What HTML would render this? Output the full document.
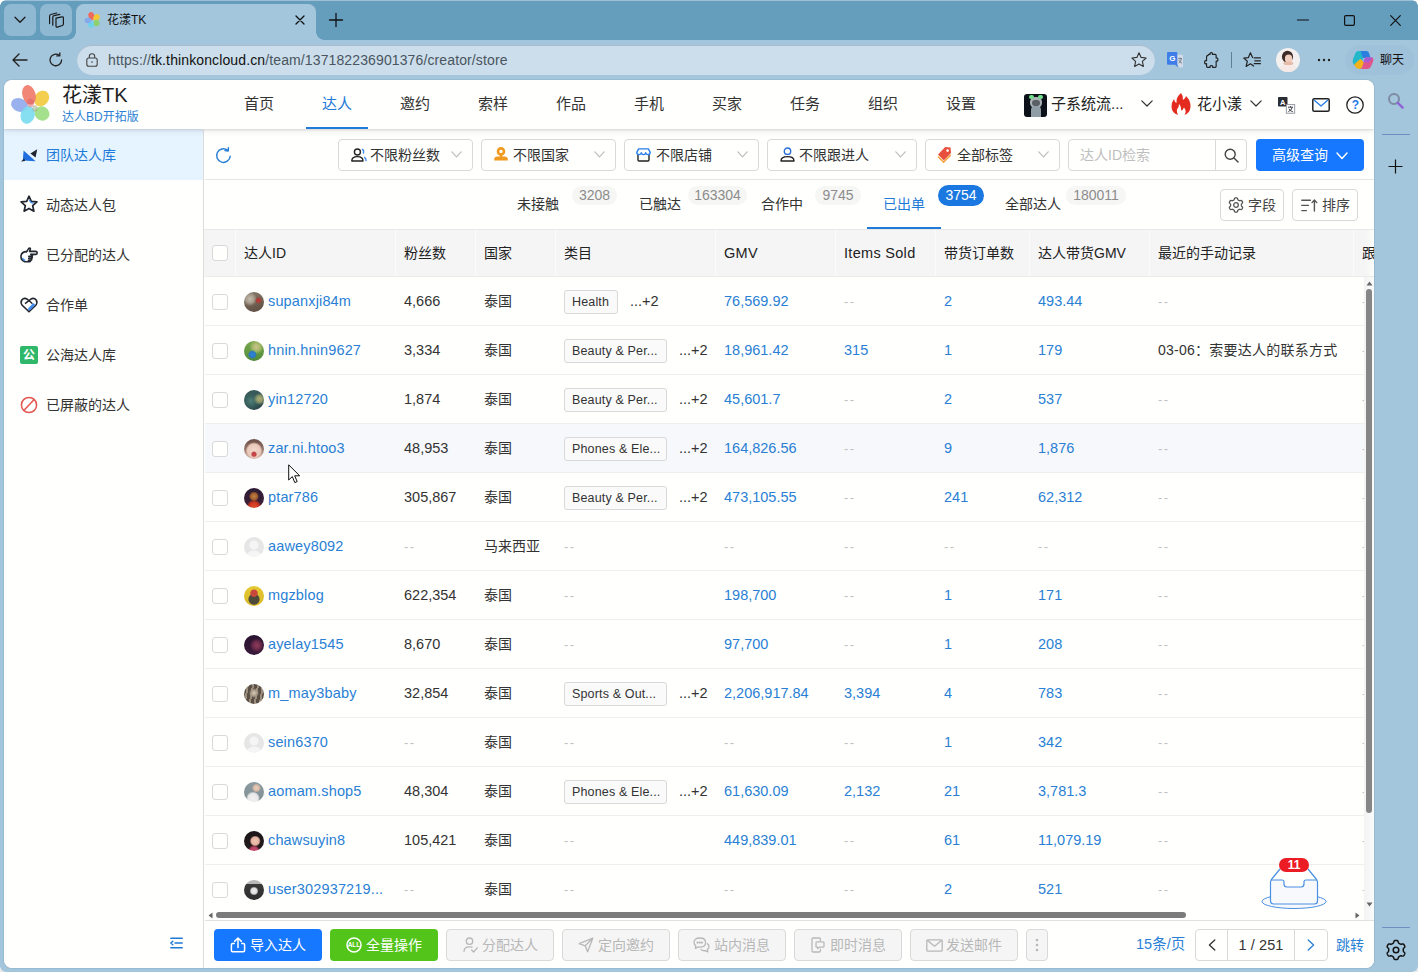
<!DOCTYPE html>
<html lang="zh-CN">
<head>
<meta charset="utf-8">
<title>花漾TK</title>
<style>
*{box-sizing:border-box;margin:0;padding:0}
html,body{width:1418px;height:972px;overflow:hidden}
body{position:relative;background:#a3c6dc;font-family:"Liberation Sans","Noto Sans CJK SC",sans-serif;font-size:14px;color:#333;-webkit-font-smoothing:antialiased}
.abs{position:absolute}
svg{display:block;overflow:visible}
/* ---------- browser chrome ---------- */
#tabstrip{position:absolute;left:0;top:0;width:1418px;height:40px;background:#659dbd;box-shadow:inset 0 1px 0 #9dbfd7}
.tsbtn{position:absolute;top:4px;width:32px;height:32px;border-radius:7px;background:#8fb8d2}
#tab{position:absolute;left:76px;top:4px;width:240px;height:36px;background:#a3c6dc;border-radius:8px 8px 0 0}
#tab:before,#tab:after{content:"";position:absolute;bottom:0;width:8px;height:8px;background:radial-gradient(circle at 0 0,rgba(0,0,0,0) 7.5px,#a3c6dc 8px)}
#tab:before{left:-8px}
#tab:after{right:-8px;background:radial-gradient(circle at 100% 0,rgba(0,0,0,0) 7.5px,#a3c6dc 8px)}
#tabtitle{position:absolute;left:31px;top:7px;font-size:12px;color:#111;line-height:18px;white-space:nowrap}
#toolbar{position:absolute;left:0;top:40px;width:1418px;height:40px;background:#a3c6dc}
#urlbar{position:absolute;left:77px;top:5px;width:1078px;height:30px;border-radius:15px;background:#ccdeeb;box-shadow:inset 0 1px 0 rgba(110,120,150,.35)}
#url{position:absolute;left:31px;top:6px;font-size:14px;line-height:18px;color:#4a5560;white-space:nowrap;letter-spacing:.12px}
#url b{font-weight:400;color:#111}
#chat{position:absolute;left:1345px;top:5px;width:69px;height:30px;border-radius:15px;background:#9fc1d9}
/* ---------- page ---------- */
#page{position:absolute;left:4px;top:80px;width:1370px;height:888px;background:#fffffd;border-radius:8px;overflow:hidden;box-shadow:0 0 1px 0 rgba(40,80,120,.9)}
#hdr{position:absolute;left:0;top:0;width:1370px;height:49px;background:#fffffd;box-shadow:0 1px 2px rgba(0,0,0,.10),0 3px 6px rgba(0,0,0,.07);z-index:5}
.nav{position:absolute;top:13px;width:78px;text-align:center;font-size:15px;line-height:22px;color:#333}
.nav.on{color:#1f7ad8}
#navline{position:absolute;left:302px;top:47px;width:62px;height:2px;background:#1f7ad8}
#side{position:absolute;left:0;top:50px;width:200px;height:838px;background:#fffffd;border-right:1px solid #dcdcdc}
.mi{position:absolute;left:0;width:199px;height:50px;line-height:50px;padding-left:42px;font-size:14px;color:#333;white-space:nowrap}
.mi.on{background:#e6f4ff;color:#1f7ad8;box-shadow:0 -1px 0 #e6f4ff}
.mi svg{position:absolute;left:15px;top:15px}
/* toolbar */
.sel{position:absolute;top:59px;height:32px;border:1px solid #d9d9d9;border-radius:4px;background:#fffffd;font-size:14px;line-height:30px;color:#333;white-space:nowrap}
.sel .t{position:absolute;left:31px;top:0}
.sel .ic{position:absolute;left:11px;top:7px}
.sel .cv{position:absolute;right:10px;top:11px}
.btn{position:absolute;height:32px;border-radius:4px;font-size:14px;line-height:30px;white-space:nowrap;text-align:center}
.btn.dis{border:1px solid #d9d9d9;background:#f5f5f5;color:#b8b8b8}
.btn.pri{background:#1677ff;color:#fff;line-height:32px}
.btn.grn{background:#52c41a;color:#fff;line-height:32px}
.btn.def{border:1px solid #d9d9d9;background:#fffffd;color:#444}
.btn svg{position:absolute}
/* tabs */
.tb{position:absolute;top:113px;font-size:14px;line-height:22px;color:#333;white-space:nowrap}
.tb.on{color:#1f7ad8}
.bd{position:absolute;top:106px;height:19px;border-radius:10px;background:#f6f6f5;color:#8c8c8c;font-size:14px;line-height:19px;text-align:center}
.bd.on{background:#1b78e0;color:#fff}
/* table */
#thead{position:absolute;left:201px;top:149px;width:1169px;box-shadow:-1px 0 0 #f5f5f5;height:48px;background:#f5f5f5;border-top:1px solid #e8e8e8;border-bottom:1px solid #ececec}
.th{position:absolute;top:0;height:46px;line-height:46px;font-size:14px;color:#222;white-space:nowrap;border-left:1px solid #fbfbfb;padding-left:8px}
.th.e{font-size:14.500px;letter-spacing:.3px}
.row{position:absolute;left:201px;width:1169px;height:49px;border-bottom:1px solid #efefef;background:#fffffd}
.row.hv{background:#f7f8fb}
.c{position:absolute;top:1px;height:48px;line-height:47px;white-space:nowrap;font-size:14.5px;letter-spacing:0;color:#333}
.c.n{letter-spacing:.15px}
.c.z{font-size:14px;letter-spacing:0}
.c.m{font-size:14px;letter-spacing:.25px}
.c.l{color:#2a7fd5}
.c.d{color:#c2c2c2;font-size:13px;letter-spacing:1.500px}
.cb{position:absolute;left:7px;top:17px;width:16px;height:16px;border:1px solid #d9d9d9;border-radius:3px;background:#fffffd}
.av{position:absolute;left:39px;top:15px;width:20px;height:20px;border-radius:50%;overflow:hidden}
.tag{position:absolute;left:359px;top:13px;height:24px;border:1px solid #d9d9d9;border-radius:3px;background:#fafafa;font-size:12.5px;line-height:22px;padding:0 7px;color:#333;letter-spacing:.15px;white-space:nowrap}
</style>
</head>
<body>
<!-- ===== browser tab strip ===== -->
<div id="tabstrip">
  <div class="tsbtn" style="left:4px"><svg class="abs" style="left:10px;top:12px" width="12" height="8" viewBox="0 0 12 8"><path d="M1 1.2 L6 6.3 L11 1.2" fill="none" stroke="#1b1b1b" stroke-width="1.3" stroke-linecap="round" stroke-linejoin="round"/></svg></div>
  <div class="tsbtn" style="left:40px"><svg class="abs" style="left:8px;top:7.500px" width="16" height="16" viewBox="0 0 16 16" fill="none" stroke="#1b1b1b" stroke-width="1.200" stroke-linejoin="round" stroke-linecap="round"><path d="M8 6.200 L14 4.800 Q15.400 4.600 15.400 5.900 V12 Q15.400 13.200 14.300 13.500 L9.300 15.100 Q8 15.400 8 14.100 Z"/><path d="M4.800 13.200 V5.200 Q4.800 4 6 3.700 L11.800 2.300"/><path d="M1.600 11.600 V4 Q1.600 2.800 2.800 2.500 L8.800 1"/></svg></div>
  <div id="tab">
    <svg class="abs" style="left:8px;top:7px" width="18" height="18" viewBox="0 0 18 18"><ellipse cx="7.5" cy="5" rx="3" ry="4" fill="#ee6a5c" transform="rotate(-20 7.5 5)"/><ellipse cx="12.5" cy="6.5" rx="3" ry="3.6" fill="#f2c838" transform="rotate(35 12.5 6.5)"/><ellipse cx="12.5" cy="12" rx="3" ry="3.3" fill="#8fd071"/><ellipse cx="7" cy="13.5" rx="3" ry="3.3" fill="#6fd3ea"/><ellipse cx="4" cy="9.5" rx="3.4" ry="2.8" fill="#86a9ec"/></svg>
    <div id="tabtitle">花漾TK</div>
    <svg class="abs" style="left:219px;top:11px" width="10" height="10" viewBox="0 0 10 10"><path d="M1 1 L9 9 M9 1 L1 9" stroke="#111" stroke-width="1.3" stroke-linecap="round"/></svg>
  </div>
  <svg class="abs" style="left:329px;top:13px" width="14" height="14" viewBox="0 0 14 14"><path d="M7 0.5 V13.5 M0.5 7 H13.5" stroke="#111" stroke-width="1.3" stroke-linecap="round"/></svg>
  <!-- window controls -->
  <svg class="abs" style="left:1297px;top:19px" width="12" height="2" viewBox="0 0 12 2"><path d="M0.5 1 H11.5" stroke="#111" stroke-width="1.2" stroke-linecap="round"/></svg>
  <svg class="abs" style="left:1344px;top:15px" width="11" height="11" viewBox="0 0 11 11"><rect x="0.6" y="0.6" width="9.8" height="9.8" rx="1.3" fill="none" stroke="#111" stroke-width="1.2"/></svg>
  <svg class="abs" style="left:1390px;top:14.500px" width="11" height="11" viewBox="0 0 11 11"><path d="M0.7 0.7 L10.3 10.3 M10.3 0.7 L0.7 10.3" stroke="#111" stroke-width="1.2" stroke-linecap="round"/></svg>
</div>
<!-- ===== browser toolbar ===== -->
<div id="toolbar">
  <svg class="abs" style="left:12px;top:13px" width="16" height="14" viewBox="0 0 16 14" fill="none" stroke="#222" stroke-width="1.4" stroke-linecap="round" stroke-linejoin="round"><path d="M15 7 H1.2 M7 1 L1 7 L7 13"/></svg>
  <svg class="abs" style="left:48px;top:12px" width="16" height="16" viewBox="0 0 16 16" fill="none" stroke="#222" stroke-width="1.3" stroke-linecap="round" stroke-linejoin="round"><path d="M13.6 8 A5.8 5.8 0 1 1 11.3 3.3"/><path d="M11.8 0.9 V3.9 H8.8"/></svg>
  <div id="urlbar">
    <svg class="abs" style="left:9px;top:8px" width="12" height="14" viewBox="0 0 12 14" fill="none" stroke="#444" stroke-width="1.1"><rect x="0.8" y="5" width="10.4" height="8.2" rx="2"/><path d="M3.3 5 V3.4 A2.7 2.7 0 0 1 8.7 3.4 V5"/><circle cx="6" cy="9.1" r="0.8" fill="#444" stroke="none"/></svg>
    <div id="url">https://<b>tk.thinkoncloud.cn</b>/team/137182236901376/creator/store</div>
    <svg class="abs" style="left:1053px;top:6px" width="18" height="18" viewBox="0 0 18 18"><path d="M9 1.8 L11.1 6.4 L16.1 7 L12.4 10.4 L13.4 15.4 L9 12.9 L4.6 15.4 L5.6 10.4 L1.9 7 L6.9 6.4 Z" fill="none" stroke="#333" stroke-width="1.1" stroke-linejoin="round"/></svg>
  </div>
  <!-- translate ext -->
  <svg class="abs" style="left:1167px;top:12px" width="17" height="16" viewBox="0 0 17 16"><path d="M8.600 2.700 H15 Q16 2.700 16 3.700 V14.400 Q16 15.400 15 15.400 H11.500 L7.600 2.700Z" fill="#d3dbe6"/><path d="M0 1 Q0 0 1 0 H9.300 Q10.300 0 10.300 1 L10.300 12.700 L11.500 15.400 L8 12.700 H1 Q0 12.700 0 11.700Z" fill="#3f7ee8"/><text x="2.200" y="9.400" font-size="8" font-family="Liberation Sans,sans-serif" font-weight="700" fill="#fff">G</text><path d="M11.200 6.600 H15 M13.100 5.600 V6.600 M11.600 11 Q14 9.600 14.400 6.800 M11.800 8.200 Q12.800 10.400 15 11.200" stroke="#6a7686" stroke-width=".9" fill="none"/></svg>
  <!-- extensions puzzle -->
  <svg class="abs" style="left:1204px;top:12px" width="14.500" height="16" viewBox="1 -.2 14.800 14.400" preserveAspectRatio="none" fill="none" stroke="#222" stroke-width="1.200" stroke-linejoin="round"><path d="M5.5 2.6 Q5.5 1.9 6.2 1.9 H7.2 Q6.8 0.4 8.4 0.4 Q10 0.4 9.6 1.9 H12.4 Q13.4 1.9 13.4 2.9 V5.2 Q15.2 4.8 15.2 6.6 Q15.2 8.4 13.4 8 V12.6 Q13.4 13.6 12.4 13.6 H9.8 Q10.2 12 8.5 12 Q6.8 12 7.2 13.6 H4.6 Q3.6 13.6 3.6 12.6 V10.4 Q1.6 10.8 1.6 9 Q1.6 7.2 3.6 7.6 V4.6 Q3.6 2.6 5.5 2.6Z"/></svg>
  <div class="abs" style="left:1231px;top:12px;width:1px;height:16px;background:#5d7f96"></div>
  <!-- favorites -->
  <svg class="abs" style="left:1243px;top:11px" width="19" height="18" viewBox="0 0 19 18" fill="none" stroke="#222" stroke-width="1.200" stroke-linecap="round" stroke-linejoin="round"><path d="M9.600 6.500 L7.400 1.800 L5.400 6.600 L.8 7.100 L4.300 10.300 L3.100 15.500 L7.400 12.800 L10.600 15"/><path d="M11.200 6.900 H17.400 M11.800 9.800 H17.400 M11.200 12.700 H17.400"/></svg>
  <!-- profile avatar -->
  <svg class="abs" style="left:1276px;top:8px" width="24" height="24" viewBox="0 0 24 24"><defs><clipPath id="pc"><circle cx="12" cy="12" r="12"/></clipPath></defs><g clip-path="url(#pc)"><rect width="24" height="24" fill="#f4f0ef"/><ellipse cx="11.500" cy="8.800" rx="5.600" ry="6" fill="#3b2a26"/><ellipse cx="12.600" cy="10.800" rx="3.700" ry="4.200" fill="#f1cfbf"/><ellipse cx="12.400" cy="15.400" rx="5" ry="1.800" fill="#e6bba9"/><ellipse cx="12" cy="21" rx="9" ry="4" fill="#f6e9e6"/></g></svg>
  <svg class="abs" style="left:1317px;top:18px" width="14" height="4" viewBox="0 0 14 4" fill="#222"><circle cx="2" cy="2" r="1.2"/><circle cx="7" cy="2" r="1.2"/><circle cx="12" cy="2" r="1.2"/></svg>
  <div id="chat">
    <svg class="abs" style="left:6px;top:4px" width="24" height="22" viewBox="0 0 24 22"><path d="M8 2 H15 Q17.5 2 18.2 4.4 L19.4 8.5 L12 9 L9 5 Z" fill="#2b7fe0"/><path d="M2.2 9.6 L4.5 3.9 Q5.3 2 7.4 2 H9.6 L12.2 10.2 L6 17 L3 16 Q1 14 2.2 9.6Z" fill="#22b8c9"/><path d="M5 18.4 Q3.4 17.3 3.2 15.6 L9.4 9.8 L13 13.6 L11.2 18.2 Q10.4 20 8.4 20 H8 Q6.2 19.6 5 18.4Z" fill="#f2b21c"/><path d="M11 18.6 L14.2 8.4 L21.8 8.4 Q23 10.8 21.9 13 L19.8 17.7 Q18.8 20 16.4 20 H8.6 Q10.4 20 11 18.6Z" fill="#e0568c"/><path d="M14 8.8 L12 13 L17.5 13.4 L21.8 8.6 Z" fill="#9b5be2" opacity=".85"/></svg>
    <div class="abs" style="left:35px;top:6px;font-size:12px;line-height:18px;color:#111;white-space:nowrap">聊天</div>
  </div>
</div>
<!-- ===== edge sidebar ===== -->
<svg class="abs" style="left:1387px;top:92px" width="18" height="18" viewBox="0 0 18 18"><circle cx="7" cy="7" r="5" fill="none" stroke="#7d8ba3" stroke-width="2"/><path d="M10.8 10.8 L15.6 15.6" stroke="#8e63d6" stroke-width="2.4" stroke-linecap="round"/></svg>
<div class="abs" style="left:1382px;top:134px;width:28px;height:1px;background:#6d8fc4"></div>
<svg class="abs" style="left:1388px;top:159px" width="15" height="15" viewBox="0 0 15 15"><path d="M7.5 0.5 V14.5 M0.5 7.5 H14.5" stroke="#111" stroke-width="1.2"/></svg>
<div class="abs" style="left:1382px;top:927px;width:28px;height:1px;background:#6d8fc4"></div>
<svg class="abs" style="left:1385px;top:939px" width="22" height="22" viewBox="0 0 22 22" fill="none" stroke="#111" stroke-width="1.500" stroke-linejoin="round"><path d="M18.30 11.00 L18.30 11.32 L18.29 11.64 L18.31 11.96 L18.39 12.30 L18.66 12.70 L19.16 13.19 L19.64 13.72 L19.83 14.21 L19.80 14.65 L19.68 15.05 L19.51 15.43 L19.31 15.80 L19.09 16.16 L18.85 16.49 L18.56 16.80 L18.20 17.04 L17.68 17.12 L16.98 16.98 L16.30 16.78 L15.83 16.75 L15.49 16.85 L15.20 17.00 L14.92 17.16 L14.65 17.32 L14.37 17.48 L14.09 17.64 L13.82 17.81 L13.57 18.05 L13.36 18.48 L13.19 19.16 L12.96 19.84 L12.63 20.25 L12.24 20.45 L11.83 20.54 L11.42 20.59 L11.00 20.60 L10.58 20.59 L10.17 20.54 L9.76 20.45 L9.37 20.25 L9.04 19.84 L8.81 19.16 L8.64 18.48 L8.43 18.05 L8.18 17.81 L7.91 17.64 L7.63 17.48 L7.35 17.32 L7.08 17.16 L6.80 17.00 L6.51 16.85 L6.17 16.75 L5.70 16.78 L5.02 16.98 L4.32 17.12 L3.80 17.04 L3.44 16.80 L3.15 16.49 L2.91 16.16 L2.69 15.80 L2.49 15.43 L2.32 15.05 L2.20 14.65 L2.17 14.21 L2.36 13.72 L2.84 13.19 L3.34 12.70 L3.61 12.30 L3.69 11.96 L3.71 11.64 L3.70 11.32 L3.70 11.00 L3.70 10.68 L3.71 10.36 L3.69 10.04 L3.61 9.70 L3.34 9.30 L2.84 8.81 L2.36 8.28 L2.17 7.79 L2.20 7.35 L2.32 6.95 L2.49 6.57 L2.69 6.20 L2.91 5.84 L3.15 5.51 L3.44 5.20 L3.80 4.96 L4.32 4.88 L5.02 5.02 L5.70 5.22 L6.17 5.25 L6.51 5.15 L6.80 5.00 L7.08 4.84 L7.35 4.68 L7.63 4.52 L7.91 4.36 L8.18 4.19 L8.43 3.95 L8.64 3.52 L8.81 2.84 L9.04 2.16 L9.37 1.75 L9.76 1.55 L10.17 1.46 L10.58 1.41 L11.00 1.40 L11.42 1.41 L11.83 1.46 L12.24 1.55 L12.63 1.75 L12.96 2.16 L13.19 2.84 L13.36 3.52 L13.57 3.95 L13.82 4.19 L14.09 4.36 L14.37 4.52 L14.65 4.68 L14.92 4.84 L15.20 5.00 L15.49 5.15 L15.83 5.25 L16.30 5.22 L16.98 5.02 L17.68 4.88 L18.20 4.96 L18.56 5.20 L18.85 5.51 L19.09 5.84 L19.31 6.20 L19.51 6.57 L19.68 6.95 L19.80 7.35 L19.83 7.79 L19.64 8.28 L19.16 8.81 L18.66 9.30 L18.39 9.70 L18.31 10.04 L18.29 10.36 L18.30 10.68Z"/><circle cx="11" cy="11" r="2.800"/></svg>
<!-- window rounded corners -->
<div class="abs" style="left:0;top:0;width:6px;height:6px;background:radial-gradient(circle at 100% 100%,rgba(255,255,255,0) 5.500px,#fff 6px)"></div>
<div class="abs" style="left:1412px;top:0;width:6px;height:6px;background:radial-gradient(circle at 0 100%,rgba(255,255,255,0) 5.500px,#fff 6px)"></div>
<div class="abs" style="left:0;top:966px;width:6px;height:6px;background:radial-gradient(circle at 100% 0,rgba(255,255,255,0) 5.500px,#e8e8e8 6px)"></div>
<div class="abs" style="left:1412px;top:966px;width:6px;height:6px;background:radial-gradient(circle at 0 0,rgba(255,255,255,0) 5.500px,#e8e8e8 6px)"></div>
<!-- ===== page ===== -->
<div id="page">
 <div id="hdr">
  <!-- logo -->
  <svg class="abs" style="left:6px;top:4px" width="42" height="42" viewBox="0 0 42 42">
    <defs><filter id="lb" x="-20%" y="-20%" width="140%" height="140%"><feGaussianBlur stdDeviation=".55"/></filter></defs>
    <g filter="url(#lb)">
    <ellipse cx="9.500" cy="21" rx="8.600" ry="6.600" fill="#8ea9ea" opacity=".9" transform="rotate(20 9.500 21)"/>
    <ellipse cx="17.700" cy="31" rx="7" ry="9" fill="#79daf0" opacity=".9" transform="rotate(18 17.700 31)"/>
    <ellipse cx="32" cy="29.500" rx="7.600" ry="7" fill="#9bde80" opacity=".9" transform="rotate(30 32 29.500)"/>
    <ellipse cx="31.600" cy="14.500" rx="7" ry="8.400" fill="#f3cb40" opacity=".92" transform="rotate(40 31.600 14.500)"/>
    <ellipse cx="19" cy="10.800" rx="6.600" ry="10" fill="#f0806f" opacity=".95" transform="rotate(-16 19 10.800)"/>
    <ellipse cx="20.500" cy="19" rx="3.600" ry="4.200" fill="#d7606c" opacity=".5"/>
    <ellipse cx="25" cy="24.500" rx="2.600" ry="3.200" fill="#9aa37a" opacity=".5"/>
    </g>
  </svg>
  <div class="abs" style="left:58px;top:1px;font-size:20px;line-height:28px;color:#1e1e1e;white-space:nowrap">花漾TK</div>
  <div class="abs" style="left:58px;top:29px;font-size:12px;line-height:17px;color:#2a7fd6;white-space:nowrap">达人BD开拓版</div>
  <!-- nav -->
  <div class="nav" style="left:216px">首页</div>
  <div class="nav on" style="left:294px">达人</div>
  <div class="nav" style="left:372px">邀约</div>
  <div class="nav" style="left:450px">索样</div>
  <div class="nav" style="left:528px">作品</div>
  <div class="nav" style="left:606px">手机</div>
  <div class="nav" style="left:684px">买家</div>
  <div class="nav" style="left:762px">任务</div>
  <div class="nav" style="left:840px">组织</div>
  <div class="nav" style="left:918px">设置</div>
  <div id="navline"></div>
  <!-- right tools -->
  <div class="abs" style="left:1020px;top:14px;width:23px;height:23px;border-radius:3px;background:#0d1118;overflow:hidden"><div class="abs" style="left:6px;top:3px;width:12px;height:11px;border-radius:5px;background:#aab3b6"></div><div class="abs" style="left:7px;top:12px;width:10px;height:11px;border-radius:4px 4px 0 0;background:#8f9ea6"></div><div class="abs" style="left:8px;top:6px;width:8px;height:6px;border-radius:3px;background:#5a5f66"></div><div class="abs" style="left:5px;top:1px;width:5px;height:4px;border-radius:2px;background:#6fe08a"></div><div class="abs" style="left:14px;top:1px;width:5px;height:4px;border-radius:2px;background:#6fe08a"></div></div>
  <div class="abs" style="left:1047px;top:13px;font-size:15px;line-height:22px;color:#222;white-space:nowrap">子系统流...</div>
  <svg class="abs" style="left:1137px;top:20px" width="12" height="7" viewBox="0 0 12 7"><path d="M.8 .8 L6 6 L11.2 .8" fill="none" stroke="#333" stroke-width="1.2" stroke-linecap="round" stroke-linejoin="round"/></svg>
  <svg class="abs" style="left:1166.500px;top:13px" width="20" height="22" viewBox="0 0 20 22"><path d="M10 0 Q12.500 3 12 7 Q14.500 5.500 15 3 Q20 8 19.500 14 Q19 20 13.500 22 Q16 18 13 14.500 Q12 17 10 17.500 Q10.500 13.500 8 11 Q8 14 6.500 15.500 Q5 18 7 22 Q1 20 .5 14 Q0 10 3 6 Q3.500 9 5.500 10 Q5 4 10 0Z" fill="#e32b20"/></svg>
  <div class="abs" style="left:1193px;top:13px;font-size:15px;line-height:22px;color:#222;white-space:nowrap">花小漾</div>
  <svg class="abs" style="left:1246px;top:20px" width="12" height="7" viewBox="0 0 12 7"><path d="M.8 .8 L6 6 L11.2 .8" fill="none" stroke="#333" stroke-width="1.2" stroke-linecap="round" stroke-linejoin="round"/></svg>
  <svg class="abs" style="left:1274px;top:17px" width="18" height="18" viewBox="0 0 18 18"><rect x="0" y="0" width="9.5" height="9.5" rx=".8" fill="#2a2e36"/><text x="1.9" y="7.8" font-size="7.5" font-weight="700" font-family="Liberation Sans,sans-serif" fill="#fff">A</text><rect x="8.3" y="7.6" width="8.4" height="8.6" fill="#fff" stroke="#8a8f98" stroke-width=".9"/><path d="M10 10.2 H15 M12.5 9.2 V10.2 M10.4 14.6 Q13.6 13.4 14.2 10.4 M10.8 11.8 Q12 14 14.8 14.7" fill="none" stroke="#2a2e36" stroke-width=".9"/></svg>
  <svg class="abs" style="left:1308px;top:18px" width="18" height="14" viewBox="0 0 18 14"><rect x=".8" y=".8" width="16.4" height="12.4" rx="1.5" fill="#fff" stroke="#222" stroke-width="1.5"/><path d="M2 2 L9 8 L16 2" fill="none" stroke="#2a7fe8" stroke-width="1.4" stroke-linejoin="round"/></svg>
  <svg class="abs" style="left:1342px;top:16px" width="18" height="18" viewBox="0 0 18 18"><circle cx="9" cy="9" r="8.2" fill="#fff" stroke="#222" stroke-width="1.3"/><text x="5.7" y="13.3" font-size="12" font-weight="700" font-family="Liberation Sans,sans-serif" fill="#1f7ae8">?</text></svg>
 </div>
 <!-- sidebar -->
 <div id="side">
  <div class="mi on" style="top:0">团队达人库<svg style="left:17px;top:19px" width="17" height="13" viewBox="0 0 17 13"><path d="M2.6 1.6 L14.6 12.2 L1.8 11.4 Z" fill="#1f6fe0"/><path d="M16.2 .2 L14.6 8.6 L9.4 4.6 Z" fill="#22262e"/><path d="M0 12.6 L3.2 9.6 L4.2 12 Z" fill="#22262e"/></svg></div>
  <div class="mi" style="top:50px">动态达人包<svg style="left:16px;top:15px" width="18" height="18" viewBox="0 0 18 18"><path d="M9.0 1.2 L11.3 6.3 L16.9 6.9 L12.7 10.7 L13.9 16.2 L9.0 13.4 L4.1 16.2 L5.3 10.7 L1.1 6.9 L6.7 6.300 Z" fill="#fff" stroke="#22262e" stroke-width="1.700" stroke-linejoin="round"/><path d="M9.600 5.600 Q10.400 7.600 12.800 8.200" fill="none" stroke="#3d8bf0" stroke-width="1.300" stroke-linecap="round"/></svg></div>
  <div class="mi" style="top:100px">已分配的达人<svg style="left:16px;top:17px" width="18" height="16" viewBox="0 0 18 16" fill="none" stroke="#22262e" stroke-width="1.600" stroke-linejoin="round" stroke-linecap="round"><path d="M6.600 4.600 L8.800 1.400 Q10 .4 10.400 1.800 L9.600 4.400 H15.800 Q17.200 4.600 17.200 5.900 Q17.200 7.200 15.800 7.400 H11"/><path d="M6.600 4.600 Q1.600 4.600 1 8.800 Q.6 13.400 4.800 14.800 H9.400 Q10.800 14.600 10.400 13.200 M10.400 13.200 H11 Q12.200 12.800 11.400 11.400 M11.400 11.400 Q13 10.800 11.800 9.400 M11.800 9.400 Q13.400 8.400 11 7.400 M8.800 9.400 H11.800 M8.800 11.400 H11.400 M8.400 13.200 H10.400"/><path d="M2.800 11.400 Q3.200 12.800 4.800 13.200" stroke="#3d8bf0" stroke-width="1.400"/></svg></div>
  <div class="mi" style="top:150px">合作单<svg style="left:16px;top:17px" width="18" height="16" viewBox="0 0 18 16"><path d="M9 14.8 L2.2 8.2 Q.2 5.6 1.8 3 Q4 .4 7 2 L9 3.6 L11 2 Q14 .4 16.2 3 Q17.8 5.6 15.8 8.2 Z" fill="#fff" stroke="#22262e" stroke-width="1.6" stroke-linejoin="round"/><path d="M5 6.6 L9 3.6 L12.4 6.8" fill="none" stroke="#22262e" stroke-width="1.4" stroke-linejoin="round"/><path d="M13.6 7.6 L9.4 12" stroke="#3d8bf0" stroke-width="2.6" stroke-linecap="round"/></svg></div>
  <div class="mi" style="top:200px">公海达人库<div class="abs" style="left:16px;top:16px;width:18px;height:18px;border-radius:2px;background:#2fb76a;color:#fff;font-size:12px;line-height:18px;text-align:center;font-weight:700">公</div></div>
  <div class="mi" style="top:250px">已屏蔽的达人<svg style="left:16px;top:16px" width="18" height="18" viewBox="0 0 18 18" fill="none" stroke="#e25650" stroke-width="1.5"><circle cx="9" cy="9" r="7.6"/><path d="M3.8 14.4 L14.2 3.6"/></svg></div>
  <svg class="abs" style="left:166px;top:807px" width="13" height="12" viewBox="0 0 13 12" fill="none" stroke="#1f7ad8" stroke-width="1.5" stroke-linecap="round"><path d="M.8 1.2 H12.2 M5 6 H12.2 M.8 10.8 H12.2"/><path d="M2.8 4.2 L.8 6 L2.8 7.8" stroke-linejoin="round"/></svg>
 </div>
 <!-- ===== filter toolbar ===== -->
 <div class="abs" style="left:201px;top:99px;width:1169px;height:1px;background:#e6e6e6"></div>
 <svg class="abs" style="left:211px;top:67px" width="17" height="17" viewBox="0 0 17 17" fill="none" stroke="#2a7fd6" stroke-width="1.5" stroke-linecap="round" stroke-linejoin="round"><path d="M15.2 9.2 A6.8 6.8 0 1 1 12.6 3.2"/><path d="M13.4 .8 L13.2 4 L10 3.6"/></svg>
 <div class="sel" style="left:334px;width:135px"><svg class="ic" style="left:12px;top:8px" width="16" height="14" viewBox="0 0 16 14" fill="none" stroke="#222" stroke-width="1.4" stroke-linecap="round"><circle cx="6.4" cy="4" r="3"/><path d="M.8 13 Q.8 8.6 6.4 8.6 Q12 8.6 12 13 Z" stroke-linejoin="round"/><path d="M11.4 1.4 Q13.2 2.4 12.4 5" stroke="#3d8bf0"/><path d="M13.6 9.4 Q15.2 10.6 15 12.6" stroke="#3d8bf0"/></svg><span class="t">不限粉丝数</span><svg class="cv" width="11" height="7" viewBox="0 0 11 7"><path d="M.8 .8 L5.5 5.8 L10.2 .8" fill="none" stroke="#bdbdbd" stroke-width="1.2" stroke-linecap="round" stroke-linejoin="round"/></svg></div>
 <div class="sel" style="left:477px;width:135px"><svg class="ic" style="left:12px;top:7px" width="14" height="14" viewBox="0 0 14 14"><circle cx="7" cy="4.400" r="3" fill="none" stroke="#f09a22" stroke-width="2.600"/><path d="M5.800 7.400 H8.200 V9.600 H10.600 Q13.600 9.600 13.800 12.200 V13.200 Q13.800 13.600 13.400 13.600 H.6 Q.2 13.600 .2 13.200 V12.200 Q.4 9.600 3.400 9.600 H5.800Z" fill="#f09a22"/></svg><span class="t">不限国家</span><svg class="cv" width="11" height="7" viewBox="0 0 11 7"><path d="M.8 .8 L5.5 5.8 L10.2 .8" fill="none" stroke="#bdbdbd" stroke-width="1.2" stroke-linecap="round" stroke-linejoin="round"/></svg></div>
 <div class="sel" style="left:620px;width:135px"><svg class="ic" style="left:11px;top:8px" width="15" height="14" viewBox="0 0 15 14" fill="none" stroke-linejoin="round"><path d="M2 6.6 V12 Q2 13 3 13 H12 Q13 13 13 12 V6.6" stroke="#222" stroke-width="1.4"/><path d="M2.6 .9 H12.4 L14.2 4.4 Q14 6.6 11.8 6.6 Q9.8 6.6 9.7 4.8 Q9.6 6.6 7.5 6.6 Q5.4 6.6 5.3 4.8 Q5.2 6.6 3.2 6.6 Q1 6.6 .8 4.4 Z" stroke="#2a7fe8" stroke-width="1.4"/></svg><span class="t">不限店铺</span><svg class="cv" width="11" height="7" viewBox="0 0 11 7"><path d="M.8 .8 L5.5 5.8 L10.2 .8" fill="none" stroke="#bdbdbd" stroke-width="1.2" stroke-linecap="round" stroke-linejoin="round"/></svg></div>
 <div class="sel" style="left:763px;width:150px"><svg class="ic" style="left:12px;top:7px" width="15" height="15" viewBox="0 0 15 15" fill="none" stroke-width="1.4" stroke-linejoin="round"><circle cx="7.5" cy="4.2" r="3.2" stroke="#2a6fd8"/><path d="M1 14 Q1 9.6 7.5 9.6 Q14 9.6 14 14 Z" stroke="#222"/></svg><span class="t">不限跟进人</span><svg class="cv" width="11" height="7" viewBox="0 0 11 7"><path d="M.8 .8 L5.5 5.8 L10.2 .8" fill="none" stroke="#bdbdbd" stroke-width="1.2" stroke-linecap="round" stroke-linejoin="round"/></svg></div>
 <div class="sel" style="left:921px;width:135px"><svg class="ic" style="left:11px;top:6px" width="15" height="17" viewBox="0 0 15 17"><path d="M1 8.6 L8.2 1 L13.6 1.6 L14 7 L6.8 14.6 Z" fill="#e8503e"/><circle cx="10.6" cy="4.6" r="1.3" fill="#fff"/><path d="M1.4 11 L6.6 16.2 L13.4 9.2" fill="none" stroke="#f4a13a" stroke-width="1.5" stroke-linecap="round" stroke-linejoin="round"/></svg><span class="t">全部标签</span><svg class="cv" width="11" height="7" viewBox="0 0 11 7"><path d="M.8 .8 L5.5 5.8 L10.2 .8" fill="none" stroke="#bdbdbd" stroke-width="1.2" stroke-linecap="round" stroke-linejoin="round"/></svg></div>
 <div class="sel" style="left:1064px;width:179px"><span class="t" style="left:11px;color:#bfbfbf">达人ID检索</span><div class="abs" style="left:146px;top:0;width:1px;height:30px;background:#d9d9d9"></div><svg class="abs" style="left:155px;top:8px" width="15" height="15" viewBox="0 0 15 15" fill="none" stroke="#444" stroke-width="1.4" stroke-linecap="round"><circle cx="6.2" cy="6.2" r="5"/><path d="M10 10 L14 14"/></svg></div>
 <div class="btn pri" style="left:1252px;top:59px;width:108px;text-align:left;padding-left:16px">高级查询<svg style="left:80px;top:13px" width="12" height="8" viewBox="0 0 12 8"><path d="M1 1 L6 6.4 L11 1" fill="none" stroke="#fff" stroke-width="1.5" stroke-linecap="round" stroke-linejoin="round"/></svg></div>
 <!-- ===== status tabs ===== -->
 <div class="tb" style="left:513px">未接触</div><div class="bd" style="left:568px;width:45px">3208</div>
 <div class="tb" style="left:635px">已触达</div><div class="bd" style="left:684px;width:59px">163304</div>
 <div class="tb" style="left:757px">合作中</div><div class="bd" style="left:811px;width:46px">9745</div>
 <div class="tb on" style="left:879px">已出单</div><div class="bd on" style="left:934px;top:105px;width:46px;height:21px;border-radius:11px;line-height:21px">3754</div>
 <div class="tb" style="left:1001px">全部达人</div><div class="bd" style="left:1062px;width:60px">180011</div>
 <div class="abs" style="left:863px;top:147px;width:74px;height:2px;background:#1f7ad8"></div>
 <div class="btn def" style="left:1216px;top:109px;width:64px;text-align:left;padding-left:27px">字段<svg style="left:7px;top:7px" width="16" height="16" viewBox="0 0 16 16" fill="none" stroke="#555" stroke-width="1.300" stroke-linejoin="round"><path d="M13.40 8.00 L13.40 8.35 L13.41 8.71 L13.56 9.11 L14.09 9.63 L14.57 10.23 L14.60 10.73 L14.45 11.18 L14.24 11.60 L13.98 12.00 L13.67 12.35 L13.21 12.57 L12.45 12.45 L11.74 12.26 L11.32 12.33 L11.00 12.50 L10.70 12.68 L10.39 12.85 L10.09 13.04 L9.82 13.37 L9.63 14.09 L9.35 14.80 L8.93 15.08 L8.47 15.18 L8.00 15.20 L7.53 15.18 L7.07 15.08 L6.65 14.80 L6.37 14.09 L6.18 13.37 L5.91 13.04 L5.61 12.85 L5.30 12.68 L5.00 12.50 L4.68 12.33 L4.26 12.26 L3.55 12.45 L2.79 12.57 L2.33 12.35 L2.02 12.00 L1.76 11.60 L1.55 11.18 L1.40 10.73 L1.43 10.23 L1.91 9.63 L2.44 9.11 L2.59 8.71 L2.60 8.35 L2.60 8.00 L2.60 7.65 L2.59 7.29 L2.44 6.89 L1.91 6.37 L1.43 5.77 L1.40 5.27 L1.55 4.82 L1.76 4.40 L2.02 4.00 L2.33 3.65 L2.79 3.43 L3.55 3.55 L4.26 3.74 L4.68 3.67 L5.00 3.50 L5.30 3.32 L5.61 3.15 L5.91 2.96 L6.18 2.63 L6.37 1.91 L6.65 1.20 L7.07 0.92 L7.53 0.82 L8.00 0.80 L8.47 0.82 L8.93 0.92 L9.35 1.20 L9.63 1.91 L9.82 2.63 L10.09 2.96 L10.39 3.15 L10.70 3.32 L11.00 3.50 L11.32 3.67 L11.74 3.74 L12.45 3.55 L13.21 3.43 L13.67 3.65 L13.98 4.00 L14.24 4.40 L14.45 4.82 L14.60 5.27 L14.57 5.77 L14.09 6.37 L13.56 6.89 L13.41 7.29 L13.40 7.65Z"/><circle cx="8" cy="8" r="2.300"/></svg></div>
 <div class="btn def" style="left:1288px;top:109px;width:66px;text-align:left;padding-left:29px">排序<svg style="left:8px;top:9px" width="17" height="13" viewBox="0 0 17 13" fill="none" stroke="#555" stroke-width="1.4" stroke-linecap="round" stroke-linejoin="round"><path d="M.8 1.2 H9.4 M.8 6.4 H7.4 M.8 11.6 H5.4"/><path d="M13.4 12 V1.2 M11 3.6 L13.4 1 L15.8 3.6"/></svg></div>
<!-- ===== table ===== -->
<div id="thead">
<div class="abs" style="right:0;top:0;width:8px;height:46px;background:linear-gradient(90deg,rgba(255,255,253,0),rgba(255,255,253,.8))"></div>
<div class="cb" style="top:15px"></div>
<div class="th" style="left:30px;width:160px">达人ID</div>
<div class="th" style="left:190px;width:80px">粉丝数</div>
<div class="th" style="left:270px;width:80px">国家</div>
<div class="th" style="left:350px;width:160px">类目</div>
<div class="th e" style="left:510px;width:120px">GMV</div>
<div class="th e" style="left:630px;width:100px">Items Sold</div>
<div class="th" style="left:730px;width:94px">带货订单数</div>
<div class="th" style="left:824px;width:120px">达人带货GMV</div>
<div class="th" style="left:944px;width:204px">最近的手动记录</div>
<div class="th" style="left:1148px;width:30px">跟</div>
</div>
<div class="row" style="top:197px"><div class="cb"></div><div class="av" style="background:radial-gradient(circle at 72% 42%,#b63a34 0,#a8403a 2.2px,rgba(0,0,0,0) 3.4px),radial-gradient(circle at 30% 35%,#c4bcae 0,#a89c8c 4px,rgba(0,0,0,0) 7px),linear-gradient(160deg,#8a7c6c,#5a4a3e)"></div><div class="c l n" style="left:63px">supanxji84m</div><div class="c " style="left:199px">4,666</div><div class="c z" style="left:279px">泰国</div><div class="tag" style="width:54px">Health</div><div class="c" style="left:425px">...+2</div><div class="c l" style="left:519px">76,569.92</div><div class="c d" style="left:639px">--</div><div class="c l" style="left:739px">2</div><div class="c l" style="left:833px">493.44</div><div class="c d" style="left:953px">--</div><div class="c d" style="left:1157px">--</div></div>
<div class="row" style="top:246px"><div class="cb"></div><div class="av" style="background:radial-gradient(circle at 42% 68%,#2f86d6 0,#2a78c4 3px,rgba(0,0,0,0) 4.500px),radial-gradient(circle at 62% 30%,#cfc48e 0,#a4b868 4px,rgba(0,0,0,0) 7px),linear-gradient(#7aa84e,#4f8a3a)"></div><div class="c l n" style="left:63px">hnin.hnin9627</div><div class="c " style="left:199px">3,334</div><div class="c z" style="left:279px">泰国</div><div class="tag" style="width:103px">Beauty &amp; Per...</div><div class="c" style="left:474px">...+2</div><div class="c l" style="left:519px">18,961.42</div><div class="c l" style="left:639px">315</div><div class="c l" style="left:739px">1</div><div class="c l" style="left:833px">179</div><div class="c m" style="left:953px">03-06：索要达人的联系方式</div><div class="c d" style="left:1157px">--</div></div>
<div class="row" style="top:295px"><div class="cb"></div><div class="av" style="background:radial-gradient(circle at 78% 45%,#b0aa7a 0,#8f9a68 3px,rgba(0,0,0,0) 6px),radial-gradient(circle at 35% 55%,#4f7f78 0,#3a625f 5px,rgba(0,0,0,0) 9px),linear-gradient(#3a5a5c,#2c474c)"></div><div class="c l n" style="left:63px">yin12720</div><div class="c " style="left:199px">1,874</div><div class="c z" style="left:279px">泰国</div><div class="tag" style="width:103px">Beauty &amp; Per...</div><div class="c" style="left:474px">...+2</div><div class="c l" style="left:519px">45,601.7</div><div class="c d" style="left:639px">--</div><div class="c l" style="left:739px">2</div><div class="c l" style="left:833px">537</div><div class="c d" style="left:953px">--</div><div class="c d" style="left:1157px">--</div></div>
<div class="row hv" style="top:344px"><div class="cb"></div><div class="av" style="background:radial-gradient(circle at 50% 76%,#c4444a 0,#c4444a 2px,rgba(0,0,0,0) 3.200px),radial-gradient(circle at 50% 58%,#f1d9cc 0,#e9c9ba 6.500px,rgba(0,0,0,0) 8.500px),linear-gradient(#6a5048 0,#8a6a5e 40%,#d8b8aa 100%)"></div><div class="c l n" style="left:63px">zar.ni.htoo3</div><div class="c " style="left:199px">48,953</div><div class="c z" style="left:279px">泰国</div><div class="tag" style="width:103px">Phones &amp; Ele...</div><div class="c" style="left:474px">...+2</div><div class="c l" style="left:519px">164,826.56</div><div class="c d" style="left:639px">--</div><div class="c l" style="left:739px">9</div><div class="c l" style="left:833px">1,876</div><div class="c d" style="left:953px">--</div><div class="c d" style="left:1157px">--</div></div>
<div class="row" style="top:393px"><div class="cb"></div><div class="av" style="background:radial-gradient(circle at 50% 42%,#c48448 0,#9e5c2c 3.500px,rgba(0,0,0,0) 5px),radial-gradient(circle at 50% 95%,#e0502e 0,#c8341f 5px,rgba(0,0,0,0) 7.500px),linear-gradient(#2c1c34,#3c2036)"></div><div class="c l n" style="left:63px">ptar786</div><div class="c " style="left:199px">305,867</div><div class="c z" style="left:279px">泰国</div><div class="tag" style="width:103px">Beauty &amp; Per...</div><div class="c" style="left:474px">...+2</div><div class="c l" style="left:519px">473,105.55</div><div class="c d" style="left:639px">--</div><div class="c l" style="left:739px">241</div><div class="c l" style="left:833px">62,312</div><div class="c d" style="left:953px">--</div><div class="c d" style="left:1157px">--</div></div>
<div class="row" style="top:442px"><div class="cb"></div><div class="av" style="background:radial-gradient(circle at 50% 40%,#f5f5f5 0,#f5f5f5 4px,rgba(0,0,0,0) 5px),radial-gradient(circle at 50% 110%,#f5f5f5 0,#f5f5f5 8px,rgba(0,0,0,0) 9px),linear-gradient(#e6e6e6,#e6e6e6)"></div><div class="c l n" style="left:63px">aawey8092</div><div class="c d" style="left:199px">--</div><div class="c z" style="left:279px">马来西亚</div><div class="c d" style="left:359px">--</div><div class="c d" style="left:519px">--</div><div class="c d" style="left:639px">--</div><div class="c d" style="left:739px">--</div><div class="c d" style="left:833px">--</div><div class="c d" style="left:953px">--</div><div class="c d" style="left:1157px">--</div></div>
<div class="row" style="top:491px"><div class="cb"></div><div class="av" style="background:radial-gradient(circle at 50% 36%,#c8463a 0,#c8463a 3.200px,rgba(0,0,0,0) 4.200px),radial-gradient(circle at 50% 66%,#4e4a3a 0,#4e4a3a 5px,rgba(0,0,0,0) 6px),linear-gradient(#e6c930,#d8b82a)"></div><div class="c l n" style="left:63px">mgzblog</div><div class="c " style="left:199px">622,354</div><div class="c z" style="left:279px">泰国</div><div class="c d" style="left:359px">--</div><div class="c l" style="left:519px">198,700</div><div class="c d" style="left:639px">--</div><div class="c l" style="left:739px">1</div><div class="c l" style="left:833px">171</div><div class="c d" style="left:953px">--</div><div class="c d" style="left:1157px">--</div></div>
<div class="row" style="top:540px"><div class="cb"></div><div class="av" style="background:radial-gradient(circle at 64% 52%,#8e3c5c 0,#6c2a4a 4px,rgba(0,0,0,0) 7px),linear-gradient(#2a1430,#3a1a3a)"></div><div class="c l n" style="left:63px">ayelay1545</div><div class="c " style="left:199px">8,670</div><div class="c z" style="left:279px">泰国</div><div class="c d" style="left:359px">--</div><div class="c l" style="left:519px">97,700</div><div class="c d" style="left:639px">--</div><div class="c l" style="left:739px">1</div><div class="c l" style="left:833px">208</div><div class="c d" style="left:953px">--</div><div class="c d" style="left:1157px">--</div></div>
<div class="row" style="top:589px"><div class="cb"></div><div class="av" style="background:radial-gradient(circle at 50% 45%,#d8cbb8 0,#a89a86 3px,rgba(0,0,0,0) 5px),repeating-linear-gradient(100deg,#5a4f45 0,#5a4f45 3px,#9a8d7c 3px,#9a8d7c 5px)"></div><div class="c l n" style="left:63px">m_may3baby</div><div class="c " style="left:199px">32,854</div><div class="c z" style="left:279px">泰国</div><div class="tag" style="width:103px">Sports &amp; Out...</div><div class="c" style="left:474px">...+2</div><div class="c l" style="left:519px">2,206,917.84</div><div class="c l" style="left:639px">3,394</div><div class="c l" style="left:739px">4</div><div class="c l" style="left:833px">783</div><div class="c d" style="left:953px">--</div><div class="c d" style="left:1157px">--</div></div>
<div class="row" style="top:638px"><div class="cb"></div><div class="av" style="background:radial-gradient(circle at 50% 40%,#f5f5f5 0,#f5f5f5 4px,rgba(0,0,0,0) 5px),radial-gradient(circle at 50% 110%,#f5f5f5 0,#f5f5f5 8px,rgba(0,0,0,0) 9px),linear-gradient(#e6e6e6,#e6e6e6)"></div><div class="c l n" style="left:63px">sein6370</div><div class="c d" style="left:199px">--</div><div class="c z" style="left:279px">泰国</div><div class="c d" style="left:359px">--</div><div class="c d" style="left:519px">--</div><div class="c d" style="left:639px">--</div><div class="c l" style="left:739px">1</div><div class="c l" style="left:833px">342</div><div class="c d" style="left:953px">--</div><div class="c d" style="left:1157px">--</div></div>
<div class="row" style="top:687px"><div class="cb"></div><div class="av" style="background:radial-gradient(circle at 62% 30%,#e8d0c0 0,#d8b8a4 3px,rgba(0,0,0,0) 4.500px),radial-gradient(circle at 45% 82%,#f1f1f1 0,#e8e8e8 5px,rgba(0,0,0,0) 7px),linear-gradient(#8a9aa0,#7f8f94)"></div><div class="c l n" style="left:63px">aomam.shop5</div><div class="c " style="left:199px">48,304</div><div class="c z" style="left:279px">泰国</div><div class="tag" style="width:103px">Phones &amp; Ele...</div><div class="c" style="left:474px">...+2</div><div class="c l" style="left:519px">61,630.09</div><div class="c l" style="left:639px">2,132</div><div class="c l" style="left:739px">21</div><div class="c l" style="left:833px">3,781.3</div><div class="c d" style="left:953px">--</div><div class="c d" style="left:1157px">--</div></div>
<div class="row" style="top:736px"><div class="cb"></div><div class="av" style="background:radial-gradient(circle at 56% 50%,#efc7b4 0,#e3b09c 4px,rgba(0,0,0,0) 5.500px),radial-gradient(circle at 50% 100%,#c85070 0,#b84060 4px,rgba(0,0,0,0) 6px),linear-gradient(#1c1618,#241a1c)"></div><div class="c l n" style="left:63px">chawsuyin8</div><div class="c " style="left:199px">105,421</div><div class="c z" style="left:279px">泰国</div><div class="c d" style="left:359px">--</div><div class="c l" style="left:519px">449,839.01</div><div class="c d" style="left:639px">--</div><div class="c l" style="left:739px">61</div><div class="c l" style="left:833px">11,079.19</div><div class="c d" style="left:953px">--</div><div class="c d" style="left:1157px">--</div></div>
<div class="row" style="top:785px"><div class="cb"></div><div class="av" style="background:radial-gradient(circle at 50% 55%,#f0f0f0 0,#dcdcdc 3px,rgba(0,0,0,0) 4.500px),linear-gradient(#b8b8b8 0,#b8b8b8 22%,#3a3a3a 22%,#2e2e2e 100%)"></div><div class="c l n" style="left:63px">user302937219...</div><div class="c d" style="left:199px">--</div><div class="c z" style="left:279px">泰国</div><div class="c d" style="left:359px">--</div><div class="c d" style="left:519px">--</div><div class="c d" style="left:639px">--</div><div class="c l" style="left:739px">2</div><div class="c l" style="left:833px">521</div><div class="c d" style="left:953px">--</div><div class="c d" style="left:1157px">--</div></div>
<div class="row" style="top:834px"><div class="cb"></div><div class="c d" style="left:199px">--</div><div class="c z" style="left:279px">泰国</div><div class="c d" style="left:359px">--</div><div class="c d" style="left:519px">--</div><div class="c d" style="left:639px">--</div><div class="c d" style="left:739px">--</div><div class="c d" style="left:833px">--</div><div class="c d" style="left:953px">--</div><div class="c d" style="left:1157px">--</div></div>
 <!-- ===== scrollbars ===== -->
 <div class="abs" style="left:201px;top:829px;width:1159px;height:11px;background:#fffffd"></div>
 <div class="abs" style="left:212px;top:832px;width:970px;height:6px;border-radius:3px;background:#7b7b7b"></div>
 <svg class="abs" style="left:204px;top:832px" width="5" height="7" viewBox="0 0 5 7"><path d="M4.5 .5 L.5 3.5 L4.5 6.5Z" fill="#666"/></svg>
 <svg class="abs" style="left:1351px;top:832px" width="5" height="7" viewBox="0 0 5 7"><path d="M.5 .5 L4.500 3.5 L.5 6.5Z" fill="#666"/></svg>
 <div class="abs" style="left:1360px;top:197px;width:10px;height:643px;background:linear-gradient(90deg,#f3f3f3,#fbfbfb)"></div>
 <div class="abs" style="left:1362px;top:209px;width:6px;height:523.500px;border-radius:3px;background:#868686"></div>
 <svg class="abs" style="left:1361.500px;top:201px" width="7" height="5" viewBox="0 0 7 5"><path d="M.5 4.500 L3.5 .5 L6.5 4.500Z" fill="#666"/></svg>
 <svg class="abs" style="left:1361.500px;top:822px" width="7" height="5" viewBox="0 0 7 5"><path d="M.5 .5 L3.5 4.500 L6.5 .5Z" fill="#666"/></svg>
 <!-- floating inbox -->
 <svg class="abs" style="left:1256px;top:776px" width="68" height="54" viewBox="0 0 68 54">
   <ellipse cx="34" cy="45.500" rx="32" ry="7" fill="#f6f8fc" stroke="#4a90e2" stroke-width="1"/>
   <path d="M20 13 L11 24 M48 13 L57 24" stroke="#4a90e2" stroke-width="1.200" fill="none"/>
   <path d="M10.500 26 Q10.500 24 12.500 24 H22 Q24 24 24 26 V28 Q24 31 27 31 H41 Q44 31 44 28 V26 Q44 24 46 24 H55.500 Q57.500 24 57.500 26 V45 Q57.500 48 54.500 48 H13.500 Q10.500 48 10.500 45 Z" fill="#f7f9fd" stroke="#4a90e2" stroke-width="1.200"/>
   <rect x="19" y="2" width="30" height="14" rx="7" fill="#ec1c24"/>
   <text x="34" y="13" text-anchor="middle" font-size="12" font-weight="700" font-family="Liberation Sans,sans-serif" fill="#fff">11</text>
 </svg>
 <!-- ===== bottom bar ===== -->
 <div class="abs" style="left:201px;top:840px;width:1169px;height:48px;background:#fffffd;border-top:1px solid #e2e2e2"></div>
 <div class="btn pri" style="left:210px;top:849px;width:108px;text-align:left;padding-left:36px">导入达人<svg style="left:16px;top:8px" width="16" height="16" viewBox="0 0 16 16" fill="none" stroke="#fff" stroke-width="1.500" stroke-linecap="round" stroke-linejoin="round"><path d="M8 10.500 V1.200 M4.600 4.400 L8 1 L11.400 4.400"/><path d="M4.200 6.600 H2.600 Q1.400 6.600 1.400 7.800 V13.600 Q1.400 14.800 2.600 14.800 H13.400 Q14.600 14.800 14.600 13.600 V7.800 Q14.600 6.600 13.400 6.600 H11.800"/></svg></div>
 <div class="btn grn" style="left:326px;top:849px;width:108px;text-align:left;padding-left:36px">全量操作<svg style="left:16px;top:8px" width="16" height="16" viewBox="0 0 16 16"><circle cx="8" cy="8" r="7" fill="none" stroke="#fff" stroke-width="1.500"/><text x="8" y="10.400" text-anchor="middle" font-size="6.500" font-weight="700" font-family="Liberation Sans,sans-serif" fill="#fff">ALL</text></svg></div>
 <div class="btn dis" style="left:442px;top:849px;width:108px;text-align:left;padding-left:35px">分配达人<svg style="left:16px;top:7px" width="15" height="16" viewBox="0 0 15 16" fill="none" stroke="#b8b8b8" stroke-width="1.300" stroke-linecap="round" stroke-linejoin="round"><circle cx="6.500" cy="4.200" r="3.200"/><path d="M1 14.500 Q1 9.800 6.500 9.800 Q8 9.800 9 10.200"/><path d="M8.600 13 L10.600 15 L14.200 10.800"/></svg></div>
 <div class="btn dis" style="left:558px;top:849px;width:108px;text-align:left;padding-left:35px">定向邀约<svg style="left:15px;top:7px" width="16" height="16" viewBox="0 0 16 16" fill="none" stroke="#b8b8b8" stroke-width="1.300" stroke-linejoin="round"><path d="M1.200 6.600 L14.800 1.200 L9.600 14.800 L7.200 8.800 Z M7.200 8.800 L14.800 1.200"/></svg></div>
 <div class="btn dis" style="left:674px;top:849px;width:108px;text-align:left;padding-left:35px">站内消息<svg style="left:14px;top:7px" width="17" height="16" viewBox="0 0 17 16" fill="none" stroke="#b8b8b8" stroke-width="1.300" stroke-linejoin="round"><path d="M6.800 1 Q12.600 1 12.600 5.600 Q12.600 10.200 6.800 10.200 Q5.800 10.200 5 10 L2.400 11.400 L2.800 8.800 Q1 7.600 1 5.600 Q1 1 6.800 1Z"/><path d="M14 6.400 Q16 7.600 16 9.600 Q16 11.400 14.400 12.400 L14.800 14.800 L12.400 13.600 Q9 14.200 7.600 12"/><circle cx="4.600" cy="5.600" r=".5"/><circle cx="6.800" cy="5.600" r=".5"/><circle cx="9" cy="5.600" r=".5"/></svg></div>
 <div class="btn dis" style="left:790px;top:849px;width:108px;text-align:left;padding-left:35px">即时消息<svg style="left:16px;top:7px" width="14" height="16" viewBox="0 0 14 16" fill="none" stroke="#b8b8b8" stroke-width="1.300" stroke-linejoin="round" stroke-linecap="round"><path d="M9.400 3.400 V2.200 Q9.400 1 8.200 1 H2.200 Q1 1 1 2.200 V13.800 Q1 15 2.200 15 H8.200 Q9.400 15 9.400 13.800 V12.400"/><path d="M6 4.800 H12 Q13 4.800 13 5.800 V9.200 Q13 10.200 12 10.200 H8.400 L6.600 11.600 V10.200 H6 Q5 10.200 5 9.200 V5.800 Q5 4.800 6 4.800Z"/></svg></div>
 <div class="btn dis" style="left:906px;top:849px;width:108px;text-align:left;padding-left:35px">发送邮件<svg style="left:15px;top:9px" width="17" height="13" viewBox="0 0 17 13" fill="none" stroke="#b8b8b8" stroke-width="1.300" stroke-linejoin="round"><rect x=".8" y=".8" width="15.400" height="11.400" rx="1"/><path d="M1.200 1.200 L8.500 7.200 L15.800 1.200"/></svg></div>
 <div class="btn dis" style="left:1022px;top:849px;width:22px"><svg style="left:8px;top:8px" width="4" height="14" viewBox="0 0 4 14" fill="#b8b8b8"><circle cx="2" cy="2" r="1.300"/><circle cx="2" cy="7" r="1.300"/><circle cx="2" cy="12" r="1.300"/></svg></div>
 <div class="abs" style="left:1132px;top:853px;font-size:14.500px;line-height:22px;color:#2a7fd6;white-space:nowrap">15条/页</div>
 <div class="abs" style="left:1191px;top:849px;width:133px;height:32px;border:1px solid #d9d9d9;border-radius:4px;background:#fffffd">
   <div class="abs" style="left:31px;top:0;width:1px;height:30px;background:#d9d9d9"></div>
   <div class="abs" style="left:98px;top:0;width:1px;height:30px;background:#d9d9d9"></div>
   <svg class="abs" style="left:12px;top:9px" width="8" height="12" viewBox="0 0 8 12"><path d="M6.800 1 L1.400 6 L6.800 11" fill="none" stroke="#333" stroke-width="1.300" stroke-linecap="round" stroke-linejoin="round"/></svg>
   <div class="abs" style="left:32px;top:0;width:66px;height:30px;line-height:30px;text-align:center;font-size:14.500px;color:#333;letter-spacing:.1px">1 / 251</div>
   <svg class="abs" style="left:111px;top:9px" width="8" height="12" viewBox="0 0 8 12"><path d="M1.200 1 L6.600 6 L1.200 11" fill="none" stroke="#2a7fd6" stroke-width="1.300" stroke-linecap="round" stroke-linejoin="round"/></svg>
 </div>
 <div class="abs" style="left:1332px;top:854px;font-size:14px;line-height:22px;color:#2a7fd6;white-space:nowrap">跳转</div>
 <!-- mouse cursor -->
 <svg class="abs" style="left:284px;top:384px;z-index:9" width="13" height="20" viewBox="0 0 13 20"><path d="M.7 .8 V16 L4.300 12.600 L6.800 18.600 L9.200 17.600 L6.700 11.800 H11.700 Z" fill="#fff" stroke="#111" stroke-width="1" stroke-linejoin="round"/></svg>
</div>
</body>
</html>
